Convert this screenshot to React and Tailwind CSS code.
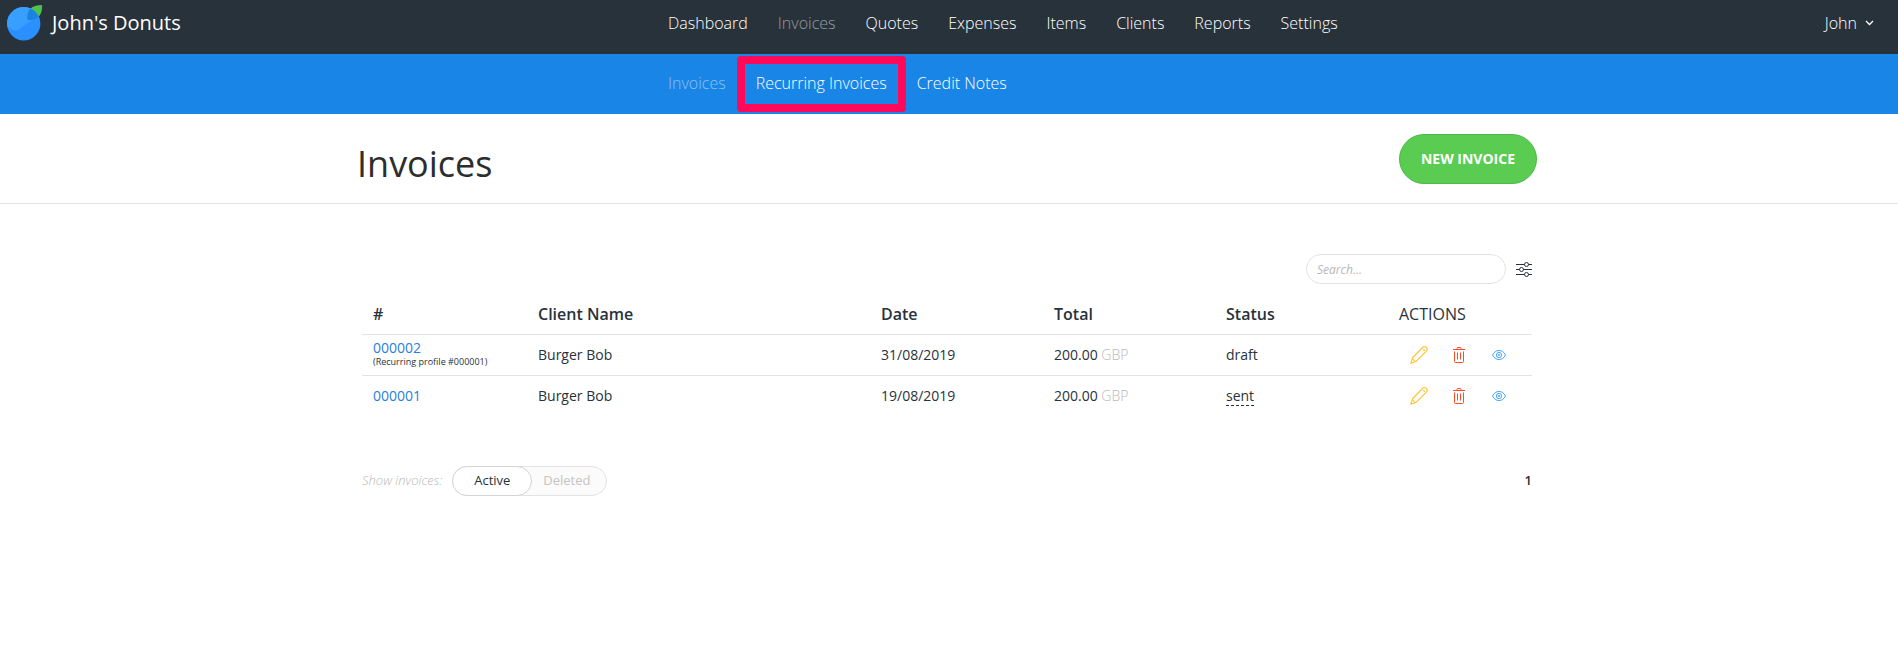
import { useState } from 'react';
import clsx from 'clsx';

const mainLinks = [
  'Dashboard', 'Invoices', 'Quotes', 'Expenses',
  'Items', 'Clients', 'Reports', 'Settings',
];

const subLinks = [
  { label: 'Invoices', active: true },
  { label: 'Recurring Invoices', highlighted: true },
  { label: 'Credit Notes' },
];

const invoices = [
  {
    number: '000002', profile: '000001', client: 'Burger Bob',
    date: '31/08/2019', total: '200.00', currency: 'GBP', status: 'draft',
  },
  {
    number: '000001', client: 'Burger Bob',
    date: '19/08/2019', total: '200.00', currency: 'GBP', status: 'sent',
  },
];

function Logo() {
  return (
    <svg viewBox="0 0 36 36" className="w-9 h-9 shrink-0" aria-hidden="true">
      <defs>
        <clipPath id="berry">
          <circle cx="16.700" cy="18.700" r="16.700" />
        </clipPath>
      </defs>
      <circle cx="16.700" cy="18.700" r="16.700" fill="#2b90ff" />
      <g clipPath="url(#berry)">
        <path d="M0 0h34v9L15 22q-3 3.500-6 3.500T0 21z" fill="#389fff" />
      </g>
      <path d="M20.500 15C19 6 24 0 35 0c.8 9-4 16-14.500 15z" fill="#4fc14d" />
      <g clipPath="url(#berry)">
        <path d="M20.500 15C19 6 24 0 35 0c.8 9-4 16-14.500 15z" fill="#1883e4" />
      </g>
    </svg>
  );
}

function ChevronIcon() {
  return (
    <svg viewBox="0 0 9 6" className="w-[9px] h-[6px]" fill="none" stroke="currentColor" strokeWidth="1.3" aria-hidden="true">
      <path d="M1 1l3.500 3.500L8 1" />
    </svg>
  );
}

function SlidersIcon() {
  return (
    <svg viewBox="0 0 16 16" className="w-4 h-4" fill="none" stroke="currentColor" aria-hidden="true">
      <path d="M0 3.500h8.500M12.500 3.500H16M0 8.500h3.500M7.500 8.500H16M0 13.500h8.500M12.500 13.500H16" />
      <circle cx="10.500" cy="3.500" r="2" />
      <circle cx="5.500" cy="8.500" r="2" />
      <circle cx="10.500" cy="13.500" r="2" />
    </svg>
  );
}

function PencilIcon() {
  return (
    <svg viewBox="0 0 18 18" className="w-[18px] h-[18px]" fill="none" stroke="currentColor" strokeWidth="1.1" strokeLinejoin="round" aria-hidden="true">
      <path d="M.8 17.200l1.900-5.700L12.600 1.500c1.200-1.100 2.800-1.100 3.800-.1s1 2.600-.1 3.800L6.300 15.200z" />
      <path d="M13.200 3.200l1.600 1.600M2.400 12.600l2.700 2.700" />
    </svg>
  );
}

function TrashIcon() {
  return (
    <svg viewBox="0 0 12 16" className="w-3 h-4" fill="none" stroke="currentColor" aria-hidden="true">
      <path d="M0 2.500h12M4 2.500V1.500Q4 .5 5 .5h2q1 0 1 1v1" />
      <path d="M1.500 4.500v10q0 1 1 1h7q1 0 1-1v-10M4.500 5.500v7M7.500 5.500v7" />
    </svg>
  );
}

function EyeIcon() {
  return (
    <svg viewBox="0 0 14 10" className="w-[14px] h-[10px]" fill="none" stroke="currentColor" aria-hidden="true">
      <path d="M.5 5C2 2 4.200.5 7 .5S12 2 13.500 5C12 8 9.800 9.500 7 9.500S2 8 .5 5z" />
      <circle cx="7" cy="5" r="2.600" />
      <circle cx="7" cy="5" r=".7" />
    </svg>
  );
}

function TopBar() {
  return (
    <header className="grid grid-cols-[calc(50%-296px)_1fr_auto] items-center h-[54px] pb-2 bg-[#28323b] text-white">
      <a href="#" className="flex items-center gap-[9px] pl-[7px] text-xl leading-6">
        <Logo />
        John's Donuts
      </a>
      <nav className="flex font-light">
        {mainLinks.map((label) => (
          <a
            key={label}
            href="#"
            className={clsx('px-[15px]', label === 'Invoices' && 'text-white/50')}
          >
            {label}
          </a>
        ))}
      </nav>
      <button type="button" className="flex items-center gap-2 pr-6 font-light">
        John
        <ChevronIcon />
      </button>
    </header>
  );
}

function SubNav() {
  return (
    <nav className="flex items-center h-[60px] pb-[2px] bg-[#1885e7] text-white font-light pl-[calc(50%-296px)]">
      {subLinks.map(({ label, active, highlighted }) => (
        <a
          key={label}
          href="#"
          className={clsx('relative px-[15px]', active && 'text-white/50')}
        >
          {label}
          {highlighted && (
            <span className="absolute -inset-x-1 -top-[15px] -bottom-[17px] border-8 border-[#ff0a5b] rounded" />
          )}
        </a>
      ))}
    </nav>
  );
}

function InvoiceTable() {
  return (
    <table className="w-full table-fixed text-left text-sm">
      <colgroup>
        <col className="w-[165px]" />
        <col />
        <col className="w-[173px]" />
        <col className="w-[172px]" />
        <col className="w-[173px]" />
        <col className="w-[144px]" />
      </colgroup>
      <thead>
        <tr className="h-10 text-base border-b border-[#e3e3e3]">
          {['#', 'Client Name', 'Date', 'Total', 'Status'].map((label) => (
            <th key={label} className="px-[11px] font-semibold">{label}</th>
          ))}
          <th className="px-[11px] font-medium">ACTIONS</th>
        </tr>
      </thead>
      <tbody>
        {invoices.map((inv) => (
          <tr key={inv.number} className="h-[41px] border-b border-[#e3e3e3] last:border-b-0">
            <td className="px-[11px] leading-4">
              <a href="#" className="text-[#2b7de0]">{inv.number}</a>
              {inv.profile && (
                <div className="pb-[2px] text-[9px] leading-3 whitespace-nowrap">(Recurring profile #{inv.profile})</div>
              )}
            </td>
            <td className="px-[11px]">{inv.client}</td>
            <td className="px-[11px]">{inv.date}</td>
            <td className="px-[11px]">
              {inv.total} <span className="font-light text-[#b8b8b8]">{inv.currency}</span>
            </td>
            <td className="px-[11px]">
              <span className={clsx(inv.status === 'sent' && 'border-b border-dashed border-[#28323b]')}>
                {inv.status}
              </span>
            </td>
            <td className="px-[11px]">
              <div className="flex">
                <button type="button" aria-label="Edit" className="w-10 flex items-center justify-center text-[#ffc42e]">
                  <PencilIcon />
                </button>
                <button type="button" aria-label="Delete" className="w-10 flex items-center justify-center text-[#ff4a26]">
                  <TrashIcon />
                </button>
                <button type="button" aria-label="View" className="w-10 flex items-center justify-center text-[#45a6ff]">
                  <EyeIcon />
                </button>
              </div>
            </td>
          </tr>
        ))}
      </tbody>
    </table>
  );
}

export default function App() {
  const [view, setView] = useState('Active');

  return (
    <div className="min-h-screen bg-white text-[#28323b] font-['Open_Sans',sans-serif]">
      <TopBar />
      <SubNav />

      <div className="border-b border-[#e3e3e3] pr-1">
        <div className="max-w-[1180px] mx-auto pt-5 pb-[19px] flex items-center justify-between">
          <h1 className="text-4xl pt-[10px] text-[#2d2d2d]">Invoices</h1>
          <button type="button" className="h-[50px] px-[21px] rounded-full border border-[#50b848] bg-[#5acc52] text-white text-sm font-bold">
            NEW INVOICE
          </button>
        </div>
      </div>

      <main className="pt-[50px] pr-1">
        <div className="max-w-[1170px] mx-auto">
          <div className="flex items-center justify-end gap-[10px] mb-[10px]">
            <input
              type="text"
              aria-label="Search"
              placeholder="Search..."
              className="w-[200px] h-[30px] px-[10px] rounded-full border border-[#e3e3e3] text-xs italic placeholder:text-[#b8b8b8] outline-none"
            />
            <button type="button" aria-label="Filters">
              <SlidersIcon />
            </button>
          </div>

          <InvoiceTable />

          <div className="flex items-center justify-between mt-[50px] text-[13px]">
            <div className="flex items-center gap-[10px]">
              <span className="italic font-light text-[#b8b8b8]">Show invoices:</span>
              <div className="flex h-[30px] rounded-full bg-[#fbfbfb] border border-[#e3e3e3]">
                {['Active', 'Deleted'].map((label) => (
                  <button
                    key={label}
                    type="button"
                    onClick={() => setView(label)}
                    className={clsx(
                      'rounded-full',
                      view === label
                        ? '-m-px w-20 bg-white border border-[#d4d4d4]'
                        : 'pl-3 pr-[15px] text-[#c4c4c4]',
                    )}
                  >
                    {label}
                  </button>
                ))}
              </div>
            </div>
            <a href="#" className="font-semibold">1</a>
          </div>
        </div>
      </main>
    </div>
  );
}
